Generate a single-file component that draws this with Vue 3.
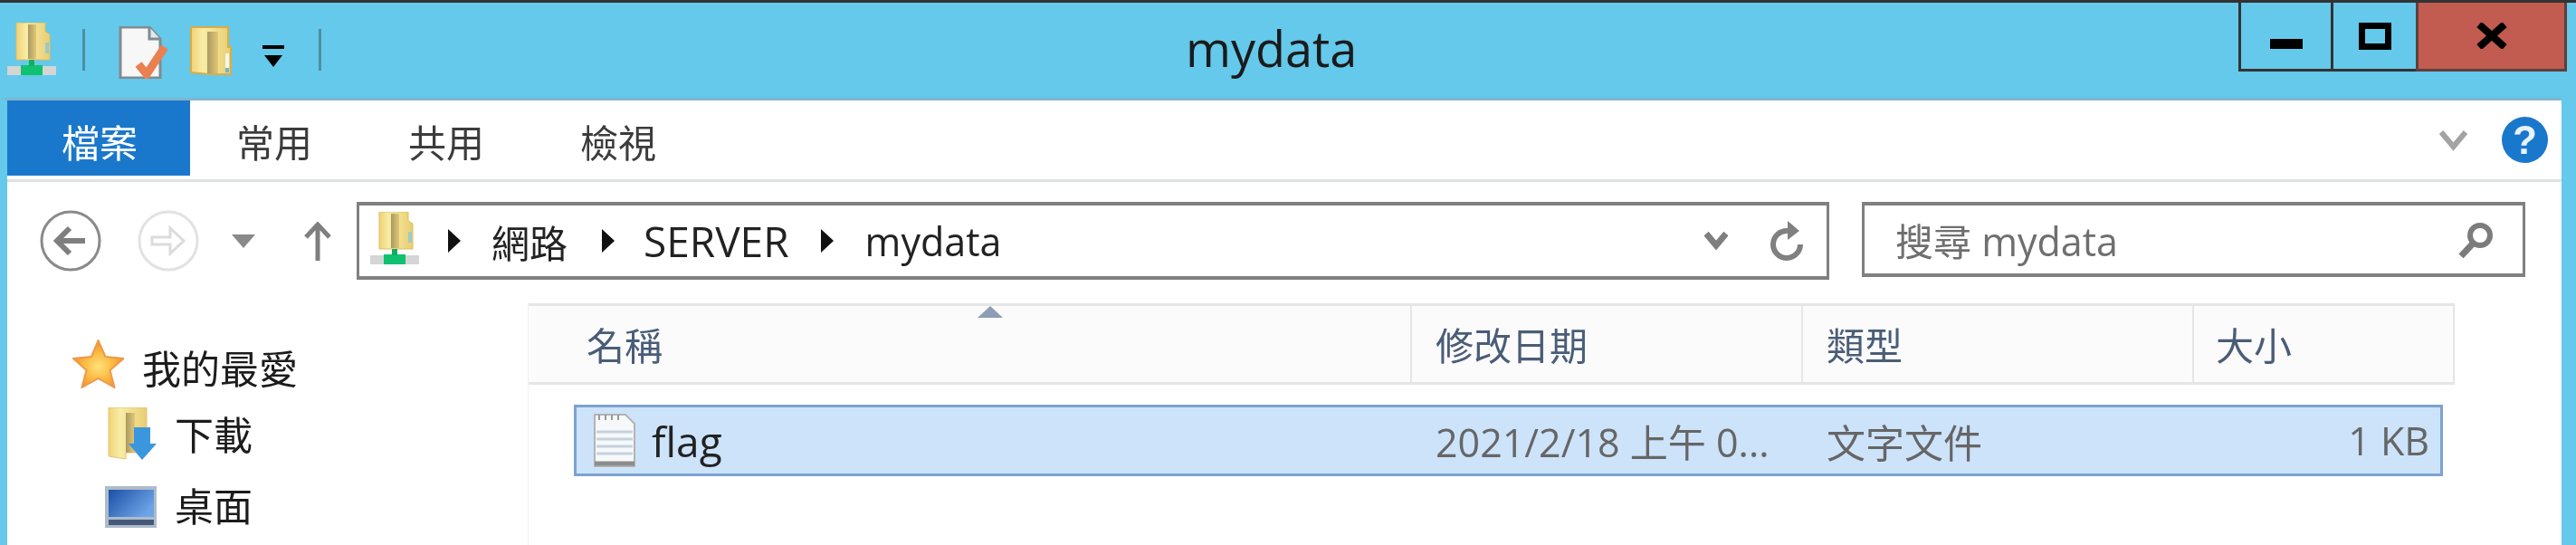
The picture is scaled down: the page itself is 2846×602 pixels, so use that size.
<template>
  <div class="window">
    <!-- shared gradients and folder shapes -->
    <svg class="defs" width="0" height="0" aria-hidden="true">
      <defs>
        <linearGradient id="folderFill" x1="0" y1="0" x2="1" y2="0">
          <stop offset="0" stop-color="#f0d277" />
          <stop offset="0.3" stop-color="#f8eda6" />
          <stop offset="1" stop-color="#e9cd72" />
        </linearGradient>
        <linearGradient id="foldFill" x1="0" y1="0" x2="1" y2="0">
          <stop offset="0" stop-color="#a99a62" />
          <stop offset="1" stop-color="#e2c876" />
        </linearGradient>
        <radialGradient id="starFill" cx="0.5" cy="0.55" r="0.55">
          <stop offset="0" stop-color="#fee27a" />
          <stop offset="0.55" stop-color="#fbb83f" />
          <stop offset="1" stop-color="#ee8b3a" />
        </radialGradient>
        <linearGradient id="screenFill" x1="0" y1="0" x2="1" y2="0.6">
          <stop offset="0" stop-color="#1c4fa6" />
          <stop offset="1" stop-color="#6da4e6" />
        </linearGradient>
        <symbol id="netFolder" viewBox="0 0 54 58">
          <path d="M10 0h32v10l5 3v28H10z" fill="url(#folderFill)" stroke="#e2bd5e" stroke-width="1" />
          <path d="M23 2h9v38h-9z" fill="url(#foldFill)" />
          <rect x="42" y="22" width="4" height="12" fill="#9ccbc8" />
          <rect x="0" y="48" width="54" height="10" fill="#d3d6d4" />
          <rect x="15" y="47" width="24" height="11" fill="#10c270" />
          <rect x="24" y="41" width="6" height="7" fill="#10b060" />
        </symbol>
      </defs>
    </svg>

    <header class="titlebar">
      <div class="qat">
        <svg class="qat-net" width="54" height="58"><use href="#netFolder" /></svg>
        <i class="qat-sep"></i>
        <svg class="qat-doc" width="54" height="58" viewBox="0 0 54 58">
          <path d="M2 1h32l12 13v43H2z" fill="#f7f7f7" stroke="#7f8c92" stroke-width="3" />
          <path d="M34 1v13h12" fill="#e4e8ea" stroke="#7f8c92" stroke-width="3" />
          <path d="M22 42l9 11 20-30" fill="none" stroke="#ea7f4f" stroke-width="9" />
        </svg>
        <svg class="qat-folder" width="46" height="58" viewBox="0 0 46 58">
          <path d="M1 1h41v22h3v30H22l-21-2z" fill="url(#folderFill)" stroke="#d9ad45" stroke-width="2" />
          <path d="M19 6h12v46H19z" fill="url(#foldFill)" />
          <rect x="39" y="30" width="4" height="16" fill="#f6f6ee" />
          <rect x="39" y="46" width="4" height="5" fill="#6fb4d6" />
        </svg>
        <svg class="qat-more" width="26" height="26" viewBox="0 0 26 26">
          <rect x="1" y="0" width="24" height="4" fill="#000" />
          <path d="M3 11h20l-10 13z" fill="#000" />
        </svg>
        <i class="qat-sep last"></i>
      </div>
      <h1 class="title">mydata</h1>
      <div class="win-btns">
        <button class="win-btn min"><i class="min-bar"></i></button>
        <button class="win-btn max"><i class="max-box"></i></button>
        <button class="win-btn close">
          <svg width="34" height="29" viewBox="0 0 34 29">
            <path d="M3 2l28 25M31 2L3 27" stroke="#000" stroke-width="8" />
          </svg>
        </button>
      </div>
    </header>

    <div class="shell">
      <nav class="ribbon">
        <div class="tab active">檔案</div>
        <div class="tab">常用</div>
        <div class="tab">共用</div>
        <div class="tab">檢視</div>
        <div class="ribbon-end">
          <svg width="31" height="25" viewBox="0 0 31 25">
            <path d="M2 3l13.500 16L29 3" fill="none" stroke="#a3a3a3" stroke-width="6" />
          </svg>
          <div class="help">?</div>
        </div>
      </nav>

      <div class="toolbar">
        <svg class="nav-back" width="68" height="68" viewBox="0 0 68 68">
          <circle cx="34" cy="34" r="32" fill="#fff" stroke="#8a8a8a" stroke-width="3" />
          <path d="M50 34H22M33 20L19 34l14 14" fill="none" stroke="#7f7f7f" stroke-width="6" />
        </svg>
        <svg class="nav-forward" width="68" height="68" viewBox="0 0 68 68">
          <circle cx="34" cy="34" r="32" fill="#fff" stroke="#e2e2e2" stroke-width="3" />
          <path d="M16 30h20V20l15 14-15 14V38H16z" fill="none" stroke="#dcdcdc" stroke-width="3" />
        </svg>
        <svg class="nav-drop" width="26" height="15" viewBox="0 0 26 15">
          <path d="M0 0h26L13 15z" fill="#8a8a8a" />
        </svg>
        <svg class="nav-up" width="30" height="43" viewBox="0 0 30 43">
          <path d="M15 43V4M2 17L15 3l13 14" fill="none" stroke="#7f7f7f" stroke-width="5" />
        </svg>

        <div class="address">
          <svg class="addr-net" width="54" height="58"><use href="#netFolder" /></svg>
          <i class="crumb-arrow first"></i>
          <span class="cjk">網路</span>
          <i class="crumb-arrow second"></i>
          <span class="server">SERVER</span>
          <i class="crumb-arrow"></i>
          <span>mydata</span>
          <svg class="addr-chevron" width="26" height="22" viewBox="0 0 26 22">
            <path d="M2 3l11 13L24 3" fill="none" stroke="#7f7f7f" stroke-width="7" />
          </svg>
          <svg class="addr-refresh" width="38" height="44" viewBox="0 0 38 44">
            <path d="M33 26a15 15 0 1 1-14-15" fill="none" stroke="#808080" stroke-width="6" />
            <path d="M19 0l13 11-13 10z" fill="#808080" />
          </svg>
        </div>

        <div class="search">
          <span class="search-text"><span class="cjk">搜尋</span> mydata</span>
          <svg width="40" height="40" viewBox="0 0 40 40">
            <circle cx="25" cy="15" r="11" fill="none" stroke="#7c7c7c" stroke-width="6" />
            <path d="M17 24L4 38" stroke="#7c7c7c" stroke-width="7" />
          </svg>
        </div>
      </div>

      <div class="main">
        <aside class="tree">
          <div class="tree-row favorites">
            <svg class="star" width="57" height="54" viewBox="0 0 57 54">
              <path d="M28.500 1l8 18 20 2-15 13 5 19-18-10-18 10 5-19L1 21l20-2z" fill="url(#starFill)" stroke="#ee9a4a" stroke-width="2" />
            </svg>
            <span>我的最愛</span>
          </div>
          <div class="tree-row downloads">
            <svg class="tree-icon" width="54" height="58" viewBox="0 0 54 58">
              <path d="M1 0h42v50H20v7L1 54z" fill="url(#folderFill)" stroke="#e2c472" stroke-width="1" />
              <path d="M20 6h10v44H20z" fill="url(#foldFill)" />
              <path d="M29 22h18v18h7L38 58 23 40h6z" fill="#3a97de" />
            </svg>
            <span>下載</span>
          </div>
          <div class="tree-row desktop">
            <svg class="tree-icon" width="57" height="46" viewBox="0 0 57 46">
              <rect width="57" height="46" fill="#aebbc9" />
              <rect x="4" y="4" width="50" height="30" fill="url(#screenFill)" />
              <rect x="4" y="37" width="50" height="6" fill="#44597a" />
            </svg>
            <span>桌面</span>
          </div>
        </aside>

        <section class="files">
          <div class="head">
            <i class="sort-arrow"></i>
            <div class="col name">名稱</div>
            <div class="col date">修改日期</div>
            <div class="col type">類型</div>
            <div class="col size">大小</div>
          </div>
          <div class="row">
            <div class="cell cell-name">
              <svg width="46" height="59" viewBox="0 0 46 59">
                <path d="M1 1h34l10 10v47H1z" fill="#f6f8fa" stroke="#b4b4b4" stroke-width="2" />
                <path d="M3 20h40M3 28h40M3 36h40M3 44h40" stroke="#c5d2de" stroke-width="3" />
                <path d="M6 1v6M13 1v6M20 1v6M27 1v6" stroke="#9a9a9a" stroke-width="2" />
                <path d="M1 55h44" stroke="#8c8c8c" stroke-width="5" />
              </svg>
              <span class="flag">flag</span>
            </div>
            <div class="cell cell-date">2021/2/18 <span class="cjk">上午</span> 0...</div>
            <div class="cell cell-type cjk">文字文件</div>
            <div class="cell cell-size">1 KB</div>
          </div>
        </section>
      </div>
    </div>
  </div>
</template>

<script setup>
</script>

<style>
html,
body {
  margin: 0;
  background: #64c9ea;
}
</style>

<style scoped>
.window {
  position: relative;
  width: 2846px;
  height: 602px;
  overflow: hidden;
  box-sizing: border-box;
  border-top: 3px solid #333;
  background: #64c9ea;
  font-family: "Open Sans", "Noto Sans CJK TC", sans-serif;
  font-size: 43px;
  color: #222;
  filter: blur(0.7px);
}

.defs {
  position: absolute;
}

.cjk {
  font-family: "Noto Sans CJK TC", sans-serif;
  font-size: 42px;
}

/* title bar */
.titlebar {
  display: grid;
  grid-template-columns: 1310px auto 1fr;
  height: 105px;
}

.qat {
  display: flex;
  align-items: flex-start;
  padding: 22px 0 0 8px;
}

.qat-sep {
  width: 3px;
  height: 46px;
  margin: 7px 0 0 29px;
  background: #4f8ea5;
}

.qat-doc {
  margin: 4px 0 0 37px;
}

.qat-folder {
  margin: 4px 0 0 25px;
}

.qat-more {
  margin: 25px 0 0 33px;
}

.qat-sep.last {
  margin-left: 37px;
}

.title {
  margin: 0;
  font-size: 54px;
  font-weight: 400;
  line-height: 1;
  padding-top: 23px;
  color: #1b1b1b;
}

.win-btns {
  display: flex;
  justify-self: end;
  align-self: flex-start;
  margin-right: 10px;
  height: 76px;
}

.win-btn {
  box-sizing: border-box;
  padding: 0;
  margin: 0;
  height: 76px;
  border: 3px solid #333;
  border-top: 0;
  border-right-width: 0;
  background: transparent;
  display: flex;
  justify-content: center;
}

.win-btn.min {
  width: 102px;
}

.win-btn.max {
  width: 94px;
}

.win-btn.close {
  width: 167px;
  background: #c25b50;
  border-color: #5e3f3d;
  border-right-width: 3px;
  padding-top: 22px;
}

.min-bar {
  width: 36px;
  height: 11px;
  margin-top: 40px;
  background: #000;
}

.max-box {
  box-sizing: border-box;
  width: 36px;
  height: 30px;
  margin-top: 22px;
  border: 7px solid #000;
}

/* white area */
.shell {
  height: 494px;
  margin: 0 16px 0 5px;
  padding-left: 3px;
  border-top: 3px solid #7fb5cf;
  background: linear-gradient(to right, #64c9ea 3px, #fff 3px);
}

.ribbon {
  display: flex;
  height: 90px;
  box-sizing: border-box;
  border-bottom: 3px solid #dfe2e3;
}

.tab {
  width: 190px;
  height: 83px;
  padding-top: 21px;
  box-sizing: border-box;
  text-align: center;
  font-family: "Noto Sans CJK TC", sans-serif;
  font-size: 42px;
  line-height: 48px;
  color: #3c3c3c;
}

.tab.active {
  width: 202px;
  margin-right: -2px;
  padding-left: 2px;
  background: #1a78cc;
  color: #fff;
}

.ribbon-end {
  display: flex;
  align-items: flex-start;
  margin-left: auto;
  padding-right: 15px;
}

.ribbon-end svg {
  margin: 32px 38px 0 0;
}

.help {
  width: 51px;
  height: 51px;
  margin-top: 18px;
  border-radius: 50%;
  background: #1a78cc;
  color: #e8f2fb;
  font-family: "Liberation Sans", sans-serif;
  font-size: 44px;
  font-weight: 700;
  line-height: 51px;
  text-align: center;
}

/* navigation row */
.toolbar {
  display: flex;
  align-items: flex-start;
  height: 134px;
  box-sizing: border-box;
  padding: 22px 0 0 36px;
}

.nav-back {
  margin-top: 9px;
}

.nav-forward {
  margin: 9px 0 0 40px;
}

.nav-drop {
  margin: 36px 0 0 36px;
}

.nav-up {
  margin: 22px 0 0 54px;
}

.address {
  display: flex;
  align-items: center;
  box-sizing: border-box;
  width: 1627px;
  height: 86px;
  margin-left: 28px;
  padding: 0 24px 0 12px;
  border: 3px solid #808080;
  border-top-width: 4px;
  border-bottom-width: 4px;
  background: #fff;
  white-space: nowrap;
}

.addr-net {
  margin-top: -6px;
}

.server {
  font-size: 46px;
}

.crumb-arrow {
  width: 0;
  height: 0;
  margin: 0 35px;
  border-left: 14px solid #111;
  border-top: 13px solid transparent;
  border-bottom: 13px solid transparent;
}

.crumb-arrow.first {
  margin: 0 34px 0 32px;
}

.crumb-arrow.second {
  margin: 0 32px 0 38px;
}

.addr-chevron {
  margin-left: auto;
}

.addr-refresh {
  margin-left: 47px;
}

.search {
  display: flex;
  align-items: center;
  justify-content: space-between;
  box-sizing: border-box;
  width: 733px;
  height: 83px;
  margin-left: 36px;
  padding: 0 32px 0 34px;
  border: 3px solid #808080;
  border-top-width: 4px;
  border-bottom-width: 4px;
  background: #fff;
  color: #6f6f6f;
}

/* content */
.main {
  display: flex;
}

.tree {
  width: 576px;
  height: 267px;
  padding-top: 40px;
  box-sizing: border-box;
  border-right: 1px solid #f1f1f1;
}

.tree-row {
  display: flex;
  align-items: center;
  font-family: "Noto Sans CJK TC", sans-serif;
  font-size: 43px;
  color: #1c1c1c;
}

.favorites {
  height: 54px;
  padding-left: 72px;
}

.favorites span {
  padding-top: 6px;
}

.star {
  margin-right: 20px;
}

.downloads {
  height: 58px;
  margin-top: 21px;
  padding-left: 111px;
}

.downloads span {
  padding-bottom: 3px;
}

.desktop {
  height: 46px;
  margin-top: 29px;
  padding-left: 108px;
}

.desktop span {
  padding-bottom: 6px;
}

.tree-icon {
  margin-right: 20px;
}

.files {
  position: relative;
  width: 2128px;
}

.head {
  display: grid;
  grid-template-columns: 976px 432px 432px 288px;
  height: 90px;
  box-sizing: border-box;
  border-top: 3px solid #e6e6e6;
  border-bottom: 3px solid #e6e6e6;
  background: #fbfbfb;
  font-family: "Noto Sans CJK TC", sans-serif;
  font-size: 42px;
  line-height: 84px;
  color: #4a5d78;
}

.col {
  box-sizing: border-box;
  padding-left: 26px;
  border-right: 2px solid #e6e6e6;
}

.col.name {
  padding-left: 64px;
}

.col.size {
  padding-left: 24px;
}

.sort-arrow {
  position: absolute;
  left: 496px;
  top: 3px;
  width: 0;
  height: 0;
  border-bottom: 13px solid #8d9db4;
  border-left: 14px solid transparent;
  border-right: 14px solid transparent;
}

.row {
  display: grid;
  grid-template-columns: 923px 432px 432px 1fr;
  width: 2065px;
  height: 79px;
  margin: 22px 0 0 50px;
  box-sizing: border-box;
  border: 3px solid #7da2ce;
  background: #cce3fa;
  align-items: center;
  color: #666;
}

.cell {
  padding-left: 26px;
  white-space: nowrap;
}

.cell-name {
  display: flex;
  align-items: center;
  padding-left: 19px;
  color: #222;
}

.flag {
  margin-left: 18px;
  font-size: 46px;
}

.cell-type {
  font-size: 43px;
}

.cell-size {
  padding-right: 12px;
  text-align: right;
}
</style>
